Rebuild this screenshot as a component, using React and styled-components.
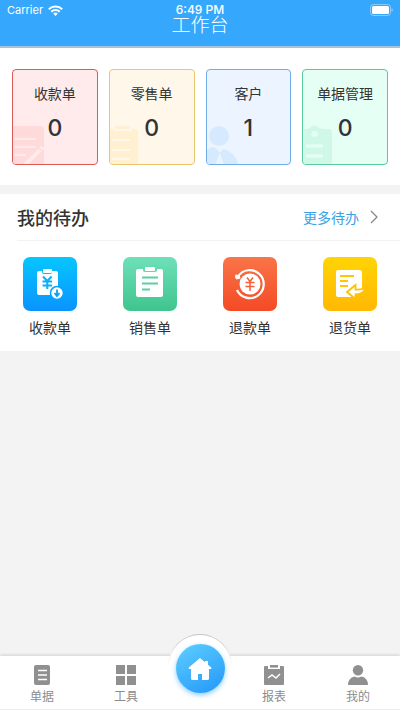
import React from 'react';
import styled, { createGlobalStyle } from 'styled-components';

const GlobalStyle = createGlobalStyle`
  * {
    box-sizing: border-box;
  }

  body {
    margin: 0;
    background: #f3f3f3;
    color: #333;
    font-family: Roboto, 'Noto Sans CJK SC', sans-serif;
  }

  button {
    border: none;
    padding: 0;
    background: none;
    font-family: inherit;
    cursor: pointer;
  }
`;

const Page = styled.div`
  display: flex;
  flex-direction: column;
  min-height: 100vh;
`;

const Header = styled.header`
  background: #35a8fd;
  border-bottom: 2px solid #a9c4da;
  color: white;
`;

const StatusBar = styled.div`
  display: grid;
  grid-template-columns: 1fr auto 1fr;
  align-items: center;
  height: 20px;
  padding: 0 7px;
  font-family: Inter, sans-serif;
  font-size: 11px;
  line-height: 20px;
`;

const Carrier = styled.span`
  display: flex;
  align-items: center;
  gap: 5px;
`;

const Time = styled.span`
  font-size: 12px;
  font-weight: 500;
`;

const Battery = styled.svg`
  justify-self: end;
`;

const Title = styled.h1`
  margin: -4px 0 0;
  height: 30px;
  font-size: 19px;
  font-weight: 300;
  line-height: 20px;
  text-align: center;
`;

const Summary = styled.section`
  display: grid;
  grid-template-columns: repeat(4, 1fr);
  gap: 11px;
  padding: 21px 12px 20px;
  background: white;
`;

const Card = styled.button`
  position: relative;
  display: flex;
  flex-direction: column;
  align-items: center;
  gap: 12px;
  height: 96px;
  padding-top: 14px;
  overflow: hidden;
  border: 1px solid ${props => props.$border};
  border-radius: 4px;
  background: ${props => props.$background};
  color: #333;
`;

const CardArt = styled.svg`
  position: absolute;
  left: 0;
  bottom: -1px;
`;

const CardLabel = styled.span`
  position: relative;
  font-size: 14px;
  line-height: 20px;
`;

const CardCount = styled.span`
  position: relative;
  font-family: Inter, sans-serif;
  font-size: 23px;
  font-weight: 500;
  line-height: 24px;
`;

const Todo = styled.section`
  margin-top: 9px;
  background: white;
`;

const TodoHeader = styled.div`
  display: flex;
  align-items: center;
  justify-content: space-between;
  height: 47px;
  margin-left: 17px;
  padding-right: 22px;
  border-bottom: 1px solid #f2f2f2;
`;

const TodoTitle = styled.h2`
  margin: 0;
  font-size: 18px;
  font-weight: 500;
`;

const MoreLink = styled.a`
  display: flex;
  align-items: center;
  gap: 11px;
  color: #3ba0e6;
  font-size: 14px;
  text-decoration: none;
`;

const TodoGrid = styled.div`
  display: grid;
  grid-template-columns: repeat(4, 1fr);
  padding: 16px 0 13px;
`;

const TodoItem = styled.button`
  display: flex;
  flex-direction: column;
  align-items: center;
  gap: 7px;
  color: #333;
  font-size: 14px;
  line-height: 20px;
`;

const Tile = styled.span`
  display: flex;
  width: 54px;
  height: 54px;
  border-radius: 7px;
  background: linear-gradient(${props => props.$from}, ${props => props.$to});
`;

const TabBar = styled.nav`
  display: grid;
  grid-template-columns: 1fr 1fr 64px 1fr 1fr;
  height: 54px;
  margin-top: auto;
  border-bottom: 1px solid #ececec;
  background: white;
  box-shadow: 0 -1px 3px rgba(0, 0, 0, 0.14);
`;

const Tab = styled.button`
  display: flex;
  flex-direction: column;
  align-items: center;
  gap: 3px;
  padding-top: 9px;
  color: #8c8c8c;
  font-size: 12px;
  line-height: 18px;
`;

const HomeSlot = styled.div`
  position: relative;
`;

const HomeRing = styled.div`
  position: absolute;
  top: -22px;
  left: 0;
  display: flex;
  justify-content: center;
  width: 64px;
  height: 64px;
  padding-top: 9px;
  border-radius: 50%;
  background: linear-gradient(white, white) padding-box,
    linear-gradient(#c4c4c4, #ececec 30%, white 50%) border-box;
  border: 1px solid transparent;
`;

const HomeButton = styled.button`
  display: flex;
  align-items: center;
  justify-content: center;
  flex: none;
  width: 49px;
  height: 49px;
  border-radius: 50%;
  background: linear-gradient(150deg, #5fcfff, #2b9ffb 85%);
  box-shadow: 0 2px 5px rgba(53, 168, 253, 0.55);
`;

const cards = [
  {
    label: '收款单',
    count: 0,
    border: '#dc5b58',
    background: '#ffebeb',
    art: (
      <>
        <path d="M0 7h27q4 0 4 4v35H0z" fill="#ffdada" />
        <path d="M1 20h22M1 28h22M1 36h12" stroke="#ffebeb" strokeWidth="2" />
        <path d="M12 46L27 31M28 30l2-2" stroke="#ffebeb" strokeWidth="4" />
      </>
    ),
  },
  {
    label: '零售单',
    count: 0,
    border: '#ebc76c',
    background: '#fff8ea',
    art: (
      <>
        <path d="M0 10h4v2h18v-2h3q3 0 3 3v33H0z" fill="#fff0d2" />
        <rect x="5" y="7" width="15" height="3" rx="1" fill="#fff0d2" />
        <path d="M2 21h18M2 31h18M2 40h18" stroke="#fff8ea" strokeWidth="2" />
      </>
    ),
  },
  {
    label: '客户',
    count: 1,
    border: '#6eacea',
    background: '#ebf4ff',
    art: (
      <>
        <circle cx="12" cy="17" r="10" fill="#d6eaff" />
        <path d="M0 31q5-5 10-1l3 4 3-4q13 3 15 16H0z" fill="#d6eaff" />
        <path d="M13 34l-5 12h9z" fill="#ebf4ff" />
      </>
    ),
  },
  {
    label: '单据管理',
    count: 0,
    border: '#56cc98',
    background: '#e6fff5',
    art: (
      <>
        <path d="M1 10h3q1-1 3-1a5 5 0 0 1 9 0q2 0 3 1h7q3 0 3 3v33H1z" fill="#d0f8e8" />
        <circle cx="11.500" cy="15" r="3" fill="#e6fff5" />
        <path d="M3 27h17M3 37h17" stroke="#e6fff5" strokeWidth="3" />
      </>
    ),
  },
];

const todos = [
  {
    label: '收款单',
    from: '#06c6ff',
    to: '#0a93fd',
    icon: (
      <>
        <path d="M16 14h3v1q0 2 2 2h6q2 0 2-2v-1h4q2 0 2 2v22H16q-2 0-2-2V16q0-2 2-2z" fill="white" />
        <rect x="20" y="12" width="9" height="4" rx="1" fill="white" />
        <path d="M20 19.500l4.300 4.500 4.300-4.500M24.300 24v8M19.500 24.500h9.600M19.500 28.500h9.600" fill="none" stroke="#08affd" strokeWidth="2" />
        <circle cx="34" cy="36" r="6.500" fill="white" stroke="#08a4fd" strokeWidth="1.600" />
        <path d="M34 32.500v6M31.500 36l2.500 3 2.500-3" fill="none" stroke="#08a0fd" strokeWidth="1.800" />
      </>
    ),
  },
  {
    label: '销售单',
    from: '#6fe0ba',
    to: '#3fc48d',
    icon: (
      <>
        <path d="M15 12h5v1q0 2 2 2h10q2 0 2-2v-1h4q2 0 2 2v24q0 2-2 2H15q-2 0-2-2V14q0-2 2-2z" fill="white" />
        <rect x="22" y="10" width="10" height="4" rx="1" fill="white" />
        <path d="M19 20.500h16M19 26.500h16M19 32.500h8" stroke="#57d1a4" strokeWidth="2" />
      </>
    ),
  },
  {
    label: '退款单',
    from: '#f97548',
    to: '#f44a25',
    icon: (
      <>
        <path d="M15 19.500A14 14 0 1 1 14 33" fill="none" stroke="white" strokeWidth="2.200" />
        <path d="M12.500 17.500l4 .5 1 3.500-4 1-1.500-2z" fill="white" />
        <circle cx="27" cy="27" r="10.500" fill="white" />
        <path d="M24 20.500l3 4 3-4M27 24v10M22.500 25.500h9M22.500 29.500h9" fill="none" stroke="#f66037" strokeWidth="1.500" />
      </>
    ),
  },
  {
    label: '退货单',
    from: '#ffd405',
    to: '#ffb803',
    icon: (
      <>
        <path d="M15 13h21q3 0 3 3v17H28v7H15q-2 0-2-2V15q0-2 2-2z" fill="white" />
        <path d="M17 19h14M17 24h8M17 29h8" stroke="#ffc604" strokeWidth="1.800" />
        <path d="M24 35l8.500-7v4.500q6 .5 10.500-2-3 7-10.500 7V42z" fill="white" stroke="#ffbf04" strokeWidth="1.800" />
      </>
    ),
  },
];

const leftTabs = [
  {
    label: '单据',
    icon: (
      <>
        <rect x="2" width="16" height="20" rx="2" />
        <path d="M6 5.500h9M6 10h9M6 14.500h9" stroke="white" strokeWidth="1.500" />
      </>
    ),
  },
  {
    label: '工具',
    icon: <path d="M0 0h9v9H0zM11 0h9v9h-9zM0 11h9v9H0zM11 11h9v9h-9z" />,
  },
];

const rightTabs = [
  {
    label: '报表',
    icon: (
      <>
        <path d="M1 1h3v3h12V1h3q1 0 1 1v17q0 1-1 1H1q-1 0-1-1V2q0-1 1-1z" />
        <rect x="6" width="8" height="2.600" />
        <path d="M4 13l4-3 4 3 4-4" fill="none" stroke="white" strokeWidth="1.500" />
      </>
    ),
  },
  {
    label: '我的',
    icon: (
      <>
        <circle cx="10" cy="5.200" r="5.200" />
        <path d="M0 20q0-7 6.500-8.500 3.500 2 7 0Q20 13 20 20z" />
      </>
    ),
  },
];

function TabItem({ label, icon }) {
  return (
    <Tab type="button">
      <svg width="20" height="20" viewBox="0 0 20 20" fill="#909090" aria-hidden="true">
        {icon}
      </svg>
      {label}
    </Tab>
  );
}

function App() {
  return (
    <Page>
      <GlobalStyle />
      <Header>
        <StatusBar>
          <Carrier>
            Carrier
            <svg width="15" height="11" viewBox="0 0 15 11" fill="none" stroke="white" strokeWidth="2" aria-hidden="true">
              <path d="M.8 4.200a9.500 9.500 0 0 1 13.400 0M3.300 6.700a6 6 0 0 1 8.400 0" />
              <path d="M7.500 11L5.200 8.600a3.300 3.300 0 0 1 4.600 0z" fill="white" stroke="none" />
            </svg>
          </Carrier>
          <Time>6:49 PM</Time>
          <Battery width="23" height="12" viewBox="0 0 23 12" aria-hidden="true">
            <rect x=".5" y=".5" width="20" height="11" rx="3" fill="none" stroke="white" strokeOpacity=".4" />
            <rect x="2" y="2" width="17" height="8" rx="1.500" fill="white" />
            <path d="M21.500 4q1.500 1 1.500 2t-1.500 2z" fill="white" fillOpacity=".4" />
          </Battery>
        </StatusBar>
        <Title>工作台</Title>
      </Header>

      <Summary>
        {cards.map(card => (
          <Card key={card.label} type="button" $border={card.border} $background={card.background}>
            <CardArt width="36" height="46" viewBox="0 0 36 46" aria-hidden="true">
              {card.art}
            </CardArt>
            <CardLabel>{card.label}</CardLabel>
            <CardCount>{card.count}</CardCount>
          </Card>
        ))}
      </Summary>

      <Todo>
        <TodoHeader>
          <TodoTitle>我的待办</TodoTitle>
          <MoreLink href="#todo">
            更多待办
            <svg width="8" height="14" viewBox="0 0 8 14" fill="none" stroke="#888" strokeWidth="1.300" aria-hidden="true">
              <path d="M1 1l6 6-6 6" />
            </svg>
          </MoreLink>
        </TodoHeader>
        <TodoGrid>
          {todos.map(todo => (
            <TodoItem key={todo.label} type="button">
              <Tile $from={todo.from} $to={todo.to}>
                <svg width="54" height="54" viewBox="0 0 54 54" aria-hidden="true">
                  {todo.icon}
                </svg>
              </Tile>
              {todo.label}
            </TodoItem>
          ))}
        </TodoGrid>
      </Todo>

      <TabBar>
        {leftTabs.map(tab => (
          <TabItem key={tab.label} {...tab} />
        ))}
        <HomeSlot>
          <HomeRing>
            <HomeButton type="button" aria-label="工作台">
              <svg width="24" height="22" viewBox="0 0 24 22" fill="white" aria-hidden="true">
                <path d="M12 0L.8 9.500Q0 11 1.500 11H3v9.500Q3 22 4.500 22H10v-6h4v6h5.500q1.500 0 1.500-1.500V11h1.500Q24 11 23.200 9.500L20 6.800V3h-3v1.300z" />
              </svg>
            </HomeButton>
          </HomeRing>
        </HomeSlot>
        {rightTabs.map(tab => (
          <TabItem key={tab.label} {...tab} />
        ))}
      </TabBar>
    </Page>
  );
}

export default App;
